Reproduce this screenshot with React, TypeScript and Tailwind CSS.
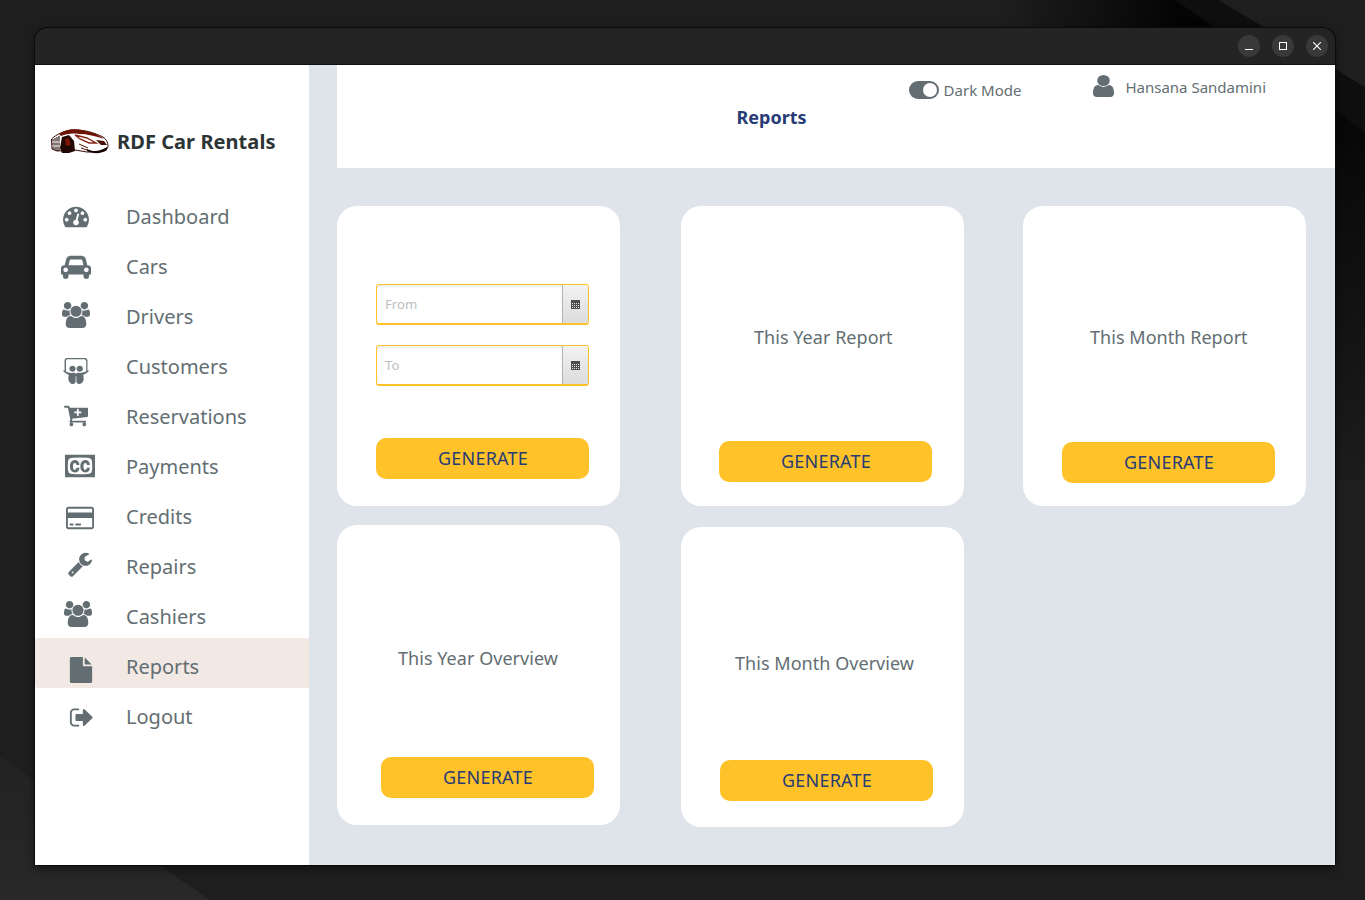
import { FaSlideshare } from "react-icons/fa"

// old font-awesome 4 glyphs, the package only ships the newer ones
const paths = {
  dashboard: "M384 1152q0-53-37.5-90.5t-90.5-37.5-90.5 37.5-37.5 90.5 37.5 90.5 90.5 37.5 90.5-37.5 37.5-90.5zm192-448q0-53-37.5-90.5t-90.5-37.5-90.5 37.5-37.5 90.5 37.5 90.5 90.5 37.5 90.5-37.5 37.5-90.5zm428 481l101-382q6-26-7.5-48.5t-38.5-29.5-48 6.5-30 39.5l-101 382q-60 5-107 43.5t-63 98.5q-20 77 20 146t117 89 146-20 89-117q16-60-6-117t-72-91zm660-33q0-53-37.5-90.5t-90.5-37.5-90.5 37.5-37.5 90.5 37.5 90.5 90.5 37.5 90.5-37.5 37.5-90.5zm-640-640q0-53-37.5-90.5t-90.5-37.5-90.5 37.5-37.5 90.5 37.5 90.5 90.5 37.5 90.5-37.5 37.5-90.5zm448 192q0-53-37.5-90.5t-90.5-37.5-90.5 37.5-37.5 90.5 37.5 90.5 90.5 37.5 90.5-37.5 37.5-90.5zm320 448q0 261-141 483-19 29-54 29h-1402q-35 0-54-29-141-221-141-483 0-182 71-348t191-286 286-191 348-71 348 71 286 191 191 286 71 348z",
  car: "M480 1088q0-66-47-113t-113-47-113 47-47 113 47 113 113 47 113-47 47-113zm36-320h1016l-89-357q-2-8-14-17.5t-21-9.5h-768q-9 0-21 9.5t-14 17.5zm1372 320q0-66-47-113t-113-47-113 47-47 113 47 113 113 47 113-47 47-113zm160-96v384q0 14-9 23t-23 9h-96v128q0 80-56 136t-136 56-136-56-56-136v-128h-1024v128q0 80-56 136t-136 56-136-56-56-136v-128h-96q-14 0-23-9t-9-23v-384q0-93 65.5-158.5t158.5-65.5h28l105-419q23-94 104-157.5t179-63.5h768q98 0 179 63.5t104 157.5l105 419h28q93 0 158.5 65.5t65.5 158.5z",
  users: "M593 896q-162 5-265 128h-134q-82 0-138-40.5t-56-118.5q0-353 124-353 6 0 43.5 21t97.5 42.5 119 21.5q67 0 133-23-5 37-5 66 0 139 81 256zm1071 637q0 120-73 189.5t-194 69.5h-874q-121 0-194-69.5t-73-189.5q0-53 3.5-103.5t14-109 26.5-108.5 43-97.5 62-81 85.5-53.5 111.5-20q10 0 43 21.5t73 48 107 48 135 21.5 135-21.5 107-48 73-48 43-21.5q61 0 111.5 20t85.5 53.5 62 81 43 97.5 26.5 108.5 14 109 3.5 103.5zm-1024-1277q0 106-75 181t-181 75-181-75-75-181 75-181 181-75 181 75 75 181zm704 384q0 159-112.5 271.5t-271.5 112.5-271.5-112.5-112.5-271.5 112.5-271.5 271.5-112.5 271.5 112.5 112.5 271.5zm576 225q0 78-56 118.5t-138 40.5h-134q-103-123-265-128 81-117 81-256 0-29-5-66 66 23 133 23 59 0 119-21.5t97.5-42.5 43.5-21q124 0 124 353zm-128-609q0 106-75 181t-181 75-181-75-75-181 75-181 181-75 181 75 75 181z",
  cart: "M1216 576q0-26-19-45t-45-19h-128v-128q0-26-19-45t-45-19-45 19-19 45v128h-128q-26 0-45 19t-19 45 19 45 45 19h128v128q0 26 19 45t45 19 45-19 19-45v-128h128q26 0 45-19t19-45zm-576 832q0 53-37.5 90.5t-90.5 37.5-90.5-37.5-37.5-90.5 37.5-90.5 90.5-37.5 90.5 37.5 37.5 90.5zm896 0q0 53-37.5 90.5t-90.5 37.5-90.5-37.5-37.5-90.5 37.5-90.5 90.5-37.5 90.5 37.5 37.5 90.5zm128-1088v512q0 24-16 42.5t-41 21.5l-1044 122q1 7 4.5 21.5t6 26.5 2.5 22q0 16-24 64h920q26 0 45 19t19 45-19 45-45 19h-1024q-26 0-45-19t-19-45q0-14 11-39.5t29.5-59.5 20.5-38l-177-823h-204q-26 0-45-19t-19-45 19-45 45-19h256q16 0 28.5 6.5t20 15.5 13 24.5 7.5 26.5 5.5 29.5 4.5 25.5h1201q26 0 45 19t19 45z",
  cc: "M785 1008h207q-14 158-98.5 248.5t-214.5 90.5q-162 0-254.5-116t-92.5-316q0-194 93-311.5t233-117.5q148 0 232 87t97 247h-203q-5-64-35.5-99t-81.5-35q-57 0-88.5 60.5t-31.5 177.5q0 48 5 84t18 69.5 40 51.5 66 18q95 0 109-139zm712 0h206q-14 158-98 248.5t-214 90.5q-162 0-254.5-116t-92.5-316q0-194 93-311.5t233-117.5q148 0 232 87t97 247h-204q-4-64-35-99t-81-35q-57 0-88.5 60.5t-31.5 177.5q0 48 5 84t18 69.5 39.5 51.5 65.5 18q49 0 76.5-38t33.5-101zm359-119q0-207-15.5-307t-60.5-161q-6-8-13.5-14t-21.5-15-16-11q-86-63-697-63-625 0-710 63-5 4-17.5 11.5t-21 14-14.5 14.5q-45 60-60 159.5t-15 308.5q0 208 15 307.5t60 160.5q6 8 15 15t20.5 14 17.5 12q44 33 239.5 49t470.5 16q610 0 697-65 5-4 17-11t20.5-14 13.5-16q46-60 61-159t15-309zm192-761v1536h-2048v-1536h2048z",
  card: "M1760 128q66 0 113 47t47 113v1216q0 66-47 113t-113 47h-1600q-66 0-113-47t-47-113v-1216q0-66 47-113t113-47h1600zm-1600 128q-13 0-22.5 9.5t-9.5 22.5v224h1664v-224q0-13-9.5-22.5t-22.5-9.5h-1600zm1600 1280q13 0 22.5-9.5t9.5-22.5v-608h-1664v608q0 13 9.5 22.5t22.5 9.5h1600zm-1504-128v-128h256v128h-256zm384 0v-128h384v128h-384z",
  wrench: "M448 1472q0-26-19-45t-45-19-45 19-19 45 19 45 45 19 45-19 19-45zm644-420l-682 682q-37 37-90 37-52 0-91-37l-106-108q-38-36-38-90 0-53 38-91l681-681q39 98 114.5 173.5t173.5 114.5zm634-435q0 39-23 106-47 134-164.5 217.5t-258.5 83.5q-185 0-316.5-131.5t-131.5-316.5 131.5-316.5 316.5-131.5q58 0 121.5 16.5t107.5 46.5q16 11 16 28t-16 28l-293 169v224l193 107q5-3 79-48.5t135.5-81 70.5-35.5q15 0 23.5 10t8.5 25z",
  file: "M1152 512v-472q22 14 36 28l408 408q14 14 28 36h-472zm-128 32q0 40 28 68t68 28h544v1056q0 40-28 68t-68 28h-1344q-40 0-68-28t-28-68v-1600q0-40 28-68t68-28h800v544z",
  logout: "M704 1440q0 4 1 20t.5 26.5-3 23.5-10 19.5-20.5 6.5h-320q-119 0-203.5-84.5t-84.5-203.5v-704q0-119 84.5-203.5t203.5-84.5h320q13 0 22.5 9.5t9.5 22.5q0 4 1 20t.5 26.5-3 23.5-10 19.5-20.5 6.5h-320q-66 0-113 47t-47 113v704q0 66 47 113t113 47h312l11.5 1 11.5 3 8 5.5 7 9 2 13.5zm928-544q0 26-19 45l-544 544q-19 19-45 19t-45-19-19-45v-288h-448q-26 0-45-19t-19-45v-384q0-26 19-45t45-19h448v-288q0-26 19-45t45-19 45 19l544 544q19 19 19 45z",
  user: "M1536 1399q0 109-62.5 187t-150.5 78h-854q-88 0-150.5-78t-62.5-187q0-85 8.5-160.5t31.5-152 58.5-131 94-89 134.5-34.5q131 128 313 128t313-128q76 0 134.5 34.5t94 89 58.5 131 31.5 152 8.5 160.5zm-256-887q0 159-112.5 271.5t-271.5 112.5-271.5-112.5-112.5-271.5 112.5-271.5 271.5-112.5 271.5 112.5 112.5 271.5z",
}

function Fa({ d, box, className }: { d: string; box: string; className: string }) {
  return (
    <svg viewBox={box} preserveAspectRatio="none" className={className} fill="#636e72" fillRule="evenodd">
      <path d={d} />
    </svg>
  )
}

const navItems = [
  { label: "Dashboard", icon: <Fa d={paths.dashboard} box="0 0 1792 1792" className="w-[26px] h-[26px] ml-[28px] mb-[2px]" /> },
  { label: "Cars", icon: <Fa d={paths.car} box="0 0 2048 1792" className="w-[30px] h-[26px] ml-[26px]" /> },
  { label: "Drivers", icon: <Fa d={paths.users} box="0 0 1920 1792" className="w-[28px] h-[26px] ml-[27px] mb-[4px]" /> },
  { label: "Customers", icon: <FaSlideshare className="w-[26px] h-[26px] ml-[28px] mt-[7px] text-[#636e72]" /> },
  { label: "Reservations", icon: <Fa d={paths.cart} box="0 0 1664 1792" className="w-[24px] h-[26px] ml-[29px]" /> },
  { label: "Payments", icon: <Fa d={paths.cc} box="0 0 2048 1792" className="w-[30px] h-[26px] ml-[30px] mb-[2px]" /> },
  { label: "Credits", icon: <Fa d={paths.card} box="0 0 1920 1792" className="w-[28px] h-[26px] ml-[31px] mt-[2px]" /> },
  { label: "Repairs", icon: <Fa d={paths.wrench} box="0 0 1792 1792" className="w-[26px] h-[26px] ml-[32px] mb-[6px]" /> },
  { label: "Cashiers", icon: <Fa d={paths.users} box="0 0 1920 1792" className="w-[28px] h-[26px] ml-[29px] mb-[6px]" /> },
  { label: "Reports", icon: <Fa d={paths.file} box="0 0 1792 1792" className="w-[26px] h-[26px] ml-[33px] mt-[6px]" /> },
  { label: "Logout", icon: <Fa d={paths.logout} box="0 0 1664 1792" className="w-[24px] h-[25px] ml-[34px] mt-[1px]" /> },
]

function Logo() {
  return (
    <svg viewBox="0 0 58 26" className="w-[58px] h-[26px]">
      {/* body outline */}
      <path d="M0.5 11 C6 6 13 3 20 2 C32 1 44 5 52 9 C55 11 57 14 57 18 C57 21 54 23 49 24 L36 24 L24 22 L6 23 L1 21 Z" fill="#fff" stroke="#3a0b04" strokeWidth="1" />
      {/* roof streak */}
      <path d="M8 6 C14 2 22 0 30 2 C38 3 47 6 53 11 C45 8 36 6 28 6 C21 5 15 6 10 8 Z" fill="#6e1405" />
      <path d="M24 7 L36 10 L45 15 L38 15 L29 11 Z" fill="none" stroke="#8a2a18" strokeWidth="1.4" />
      {/* left grille hatching */}
      <path d="M2 11v10M4 10v12M6 9v14M8 8v15" stroke="#1f0805" strokeWidth="1.1" />
      <path d="M1 14h9M1 18h9" stroke="#fff" strokeWidth="0.9" />
      {/* dark wheel arch */}
      <path d="M11 9 L18 7 L23 13 L24 23 L18 25 L11 25 L9 20 Z" fill="#220804" />
      <path d="M14 11 L18 10 L20 17 L15 18 Z" fill="#7a1606" />
      {/* lower right */}
      <path d="M36 21 C42 24 48 24 56 19 L56 22 C50 26 42 26 36 23 Z" fill="#170503" />
      <path d="M45 12 L53 13 L56 17 L50 17 Z" fill="#4d0f05" />
      <path d="M28 16 L37 20 M30 20 L36 22" stroke="#5d1206" strokeWidth="1" />
    </svg>
  )
}

function Generate({ className }: { className: string }) {
  return (
    <button className={`w-[213px] h-[41px] rounded-[10px] bg-[#ffc329] pl-[1px] text-[#273c75] text-[18px] tracking-[0.2px] ${className}`}>
      GENERATE
    </button>
  )
}

function DateField({ placeholder }: { placeholder: string }) {
  return (
    <div className="flex w-[213px] h-[41px] rounded-[3px] border-[1.5px] border-[#ffc329] border-b-2 bg-white overflow-hidden">
      <div className="flex-1 pl-[8px] text-[13.2px] leading-[38px] text-[#bdbdbd] shadow-[inset_0_2px_3px_rgba(0,0,0,0.08)]">{placeholder}</div>
      <div className="flex w-[26px] items-center justify-center border-l border-l-[#b5b5b5] bg-gradient-to-b from-[#f2f2f2] to-[#dcdcdc]">
        <svg viewBox="0 0 9 9" className="w-[9px] h-[9px]">
          <rect width="9" height="9" fill="#4d4d4d" />
          <path d="M1 3h1v1H1zM3 3h1v1H3zM5 3h1v1H5zM7 3h1v1H7zM1 5h1v1H1zM3 5h1v1H3zM5 5h1v1H5zM7 5h1v1H7zM1 7h1v1H1zM3 7h1v1H3zM5 7h1v1H5zM7 7h1v1H7z" fill="#e8e8e8" />
        </svg>
      </div>
    </div>
  )
}

function ReportCard({ label, labelClass, buttonClass, cardClass }: { label: string; labelClass: string; buttonClass: string; cardClass: string }) {
  return (
    <div className={`w-[283px] h-[300px] rounded-[20px] bg-white ${cardClass}`}>
      <p className={`text-[18px] leading-[24px] tracking-[0.04px] text-[#636e72] ${labelClass}`}>{label}</p>
      <Generate className={buttonClass} />
    </div>
  )
}

export default function App() {
  return (
    <div className="relative h-[900px] w-[1365px] overflow-hidden bg-[#1e1e1e] pl-[35px] pt-[28px] font-['Noto_Sans',sans-serif]">
      {/* wallpaper */}
      <svg viewBox="0 0 1365 900" className="absolute inset-0 w-[1365px] h-[900px]">
        <defs>
          <linearGradient id="topFade" gradientUnits="userSpaceOnUse" x1="1000" y1="0" x2="1180" y2="0">
            <stop offset="0" stopColor="#1e1e1e" />
            <stop offset="1" stopColor="#040404" />
          </linearGradient>
          <linearGradient id="rightFade" gradientUnits="userSpaceOnUse" x1="0" y1="120" x2="0" y2="480">
            <stop offset="0" stopColor="#070707" />
            <stop offset="1" stopColor="#1c1c1c" />
          </linearGradient>
          <linearGradient id="cornerFade" gradientUnits="userSpaceOnUse" x1="0" y1="760" x2="0" y2="900">
            <stop offset="0" stopColor="#232323" />
            <stop offset="1" stopColor="#282828" />
          </linearGradient>
        </defs>
        <polygon points="1000,0 1175,0 1225,30 1000,30" fill="url(#topFade)" />
        <polygon points="1175,0 1218,0 1365,87 1365,132" fill="#0e0e0e" />
        <polygon points="1225,30 1365,132 1365,480 1225,480" fill="url(#rightFade)" />
        <polygon points="0,757 210,900 0,900" fill="url(#cornerFade)" />
      </svg>

      <div className="relative w-[1300px] h-[837px] rounded-t-[13px] overflow-hidden shadow-[0_0_0_1px_#0a0a0a,0_3px_10px_rgba(0,0,0,0.55)]">
        <div className="flex h-[37px] items-center justify-end gap-3 bg-[#242424] pr-[7px] border-b border-b-[#111]">
          <div className="flex w-[22px] h-[22px] items-center justify-center rounded-full bg-[#393939]">
            <div className="mt-[6px] w-[8px] h-[1px] bg-white" />
          </div>
          <div className="flex w-[22px] h-[22px] items-center justify-center rounded-full bg-[#393939]">
            <div className="w-[8px] h-[8px] border border-white" />
          </div>
          <div className="flex w-[22px] h-[22px] items-center justify-center rounded-full bg-[#393939]">
            <svg viewBox="0 0 8 8" className="w-[8px] h-[8px]"><path d="M0 0L8 8M8 0L0 8" stroke="#fff" strokeWidth="1.1" /></svg>
          </div>
        </div>

        <div className="flex h-[800px] bg-[#dfe4ea]">
          <aside className="w-[274px] bg-white">
            <div className="flex h-[123px] items-start pl-[16px] pt-[63px]">
              <Logo />
              <span className="ml-[8px] text-[20px] font-bold leading-[28px] tracking-[0.06px] text-[#2d3436]">RDF Car Rentals</span>
            </div>
            {navItems.map((n) => (
              <div key={n.label} className={`flex h-[50px] items-center pt-[8px] ${n.label === "Reports" ? "bg-[#f2e8e4] rounded-l-[3px]" : ""}`}>
                <div className="flex w-[91px] items-center">{n.icon}</div>
                <span className="text-[20px] text-[#636e72]">{n.label}</span>
              </div>
            ))}
          </aside>

          <main className="flex-1 pl-[28px]">
            <header className="flex h-[103px] bg-white">
              <h1 className="ml-[399.5px] mt-[38px] text-[18px] font-bold leading-[28px] text-[#273c75]">Reports</h1>
              <div className="ml-[102px] mt-[15px] flex h-[20px] items-center">
                <div className="flex w-[30px] h-[18px] items-center justify-end rounded-full bg-[#636e72] pr-[2px]">
                  <div className="w-[14px] h-[14px] rounded-full bg-white" />
                </div>
                <span className="ml-[5px] text-[15px] text-[#636e72]">Dark Mode</span>
              </div>
              <div className="ml-[72px] mt-[10px] flex h-[24px] items-start">
                <Fa d={paths.user} box="256 128 1280 1536" className="w-[21px] h-[22px]" />
                <span className="ml-[11px] mt-[1px] text-[15px] leading-[22px] text-[#636e72]">Hansana Sandamini</span>
              </div>
            </header>

            <div className="mt-[38px] flex">
              <div className="w-[283px] h-[300px] rounded-[20px] bg-white pl-[39px] pt-[78px]">
                <DateField placeholder="From" />
                <div className="mt-[20px]"><DateField placeholder="To" /></div>
                <Generate className="mt-[52px]" />
              </div>
              <ReportCard cardClass="ml-[61px] pt-[119px]" label="This Year Report" labelClass="ml-[73px]" buttonClass="ml-[38px] mt-[92px]" />
              <ReportCard cardClass="ml-[59px] pt-[119px]" label="This Month Report" labelClass="ml-[67px]" buttonClass="ml-[39px] mt-[93px]" />
            </div>

            <div className="mt-[19px] flex">
              <ReportCard cardClass="pt-[121px]" label="This Year Overview" labelClass="ml-[61px]" buttonClass="ml-[44px] mt-[87px]" />
              <ReportCard cardClass="ml-[61px] mt-[2px] pt-[124px]" label="This Month Overview" labelClass="ml-[54px]" buttonClass="ml-[39px] mt-[85px]" />
            </div>
          </main>
        </div>
      </div>
    </div>
  )
}
